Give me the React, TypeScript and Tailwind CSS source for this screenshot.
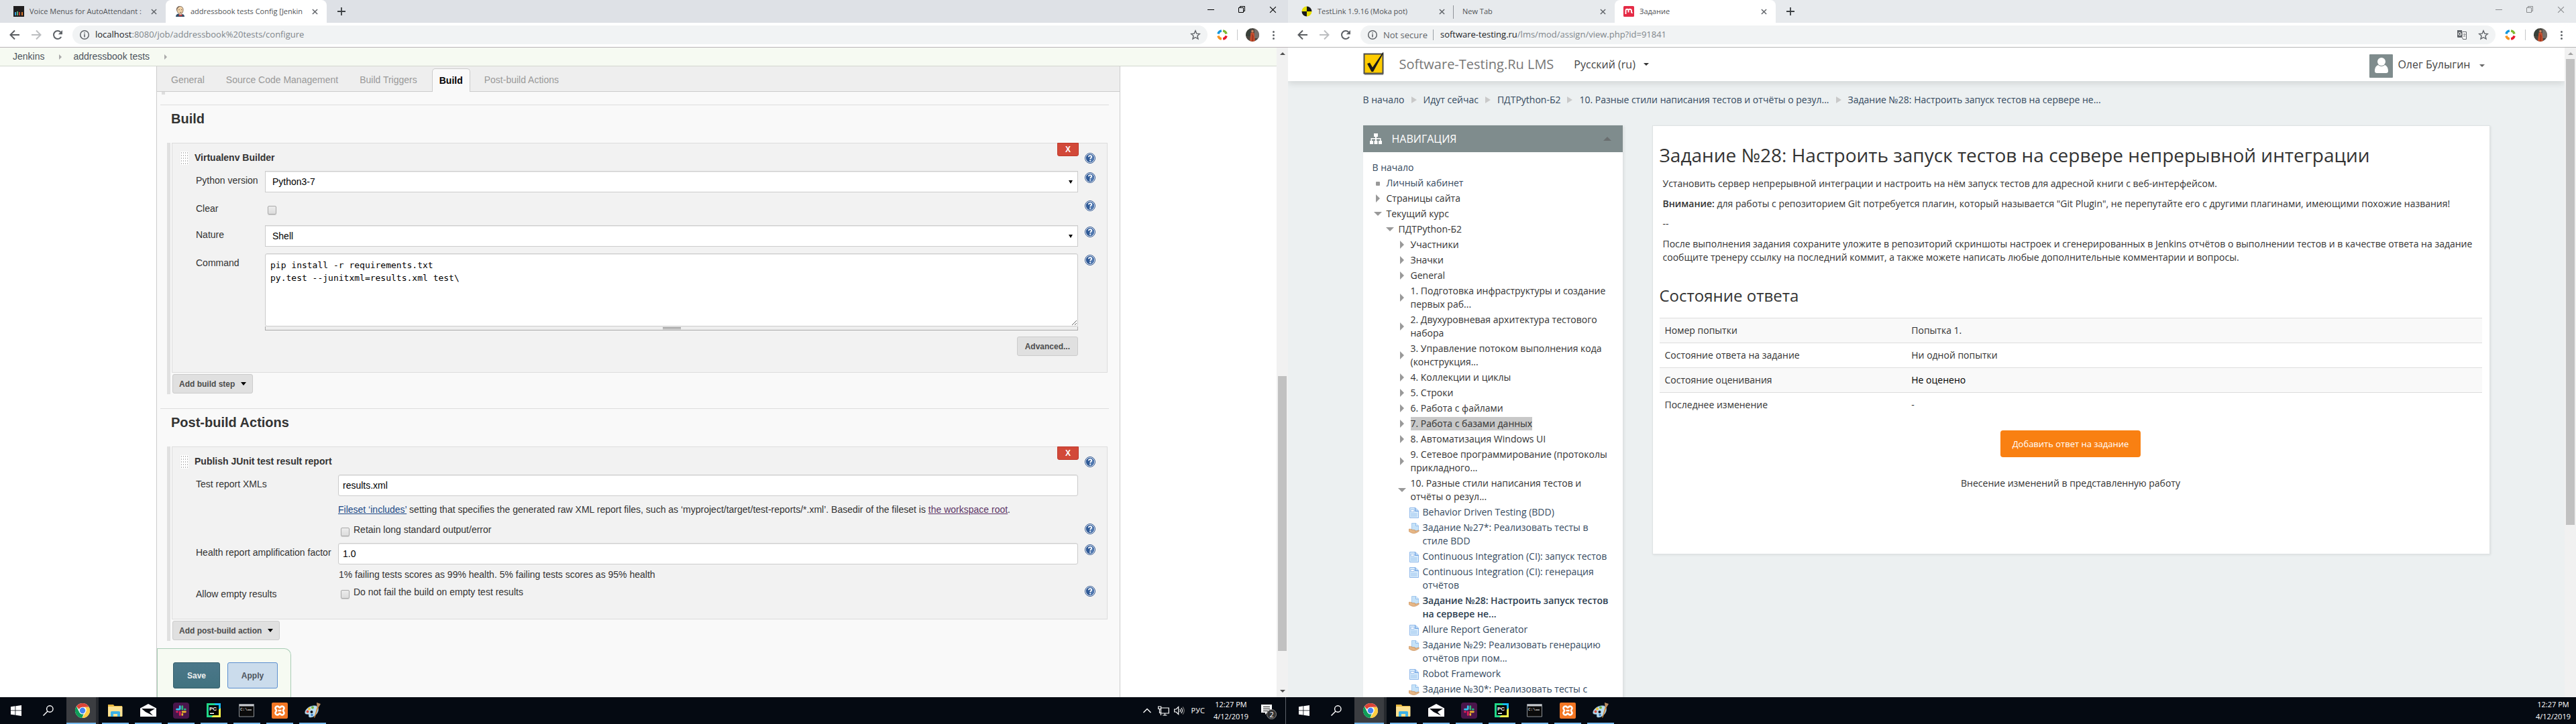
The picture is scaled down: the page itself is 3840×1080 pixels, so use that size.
import React from "react";

const UI = "font-['Open_Sans','Noto_Sans',sans-serif]";
const ARIAL = "font-['Liberation_Sans',Arial,sans-serif]";

/* ---------- shared icons ---------- */

function CloseIcon({ className }: { className: string }) {
  return (
    <svg viewBox="0 0 10 10" className={className} fill="none" stroke="currentColor">
      <path d="M1 1l8 8M9 1L1 9" />
    </svg>
  );
}

function ArrowIcon({ flip, color }: { flip?: boolean; color: string }) {
  return (
    <svg viewBox="0 0 16 16" className="size-4" fill="none" stroke={color} strokeWidth="2">
      {flip ? <path d="M1 8h13M8 1.5L14.5 8L8 14.5" /> : <path d="M15 8H2M8 1.5L1.5 8L8 14.5" />}
    </svg>
  );
}

function ReloadIcon() {
  return (
    <svg viewBox="0 0 16 16" className="size-4">
      <path d="M13.2 11A6 6 0 1 1 12.4 3.9" fill="none" stroke="#5f6368" strokeWidth="2" />
      <path d="M15 1v6.2H8.8z" fill="#5f6368" />
    </svg>
  );
}

function InfoIcon() {
  return (
    <svg viewBox="0 0 16 16" className="size-4 shrink-0">
      <circle cx="8" cy="8" r="6.3" fill="none" stroke="#5f6368" strokeWidth="1.5" />
      <path d="M7.2 7h1.6v4.6H7.2zM7.2 4.4h1.6V6H7.2z" fill="#5f6368" />
    </svg>
  );
}

function StarIcon() {
  return (
    <svg viewBox="0 0 16 16" className="size-4" fill="none" stroke="#5f6368" strokeWidth="1.4">
      <path d="M8 1.8l1.8 4.3 4.6.4-3.5 3 1.1 4.6L8 11.7l-4 2.4 1.1-4.6-3.5-3 4.6-.4z" />
    </svg>
  );
}

function TranslateIcon() {
  return (
    <svg viewBox="0 0 16 16" className="size-4">
      <path d="M1 1h7l1.5 11H2a1 1 0 0 1-1-1z" fill="#5f6368" />
      <path d="M9 3.5h5.5v11H9.5L8.500 12" fill="#fff" stroke="#5f6368" strokeWidth="1" />
      <path d="M7 6.300H5M7 6.300A2.200 2.200 0 1 1 6 4.600" fill="none" stroke="#fff" strokeWidth="1" />
      <path d="M9.500 7h4M11.500 6v1M12.800 7c-.3 2-1.500 3.300-2.800 4M10.500 8.500c.5 1 1.500 2 2.500 2.500" fill="none" stroke="#5f6368" strokeWidth=".8" />
    </svg>
  );
}

function RingIcon() {
  return (
    <svg viewBox="0 0 16 16" className="size-4" fill="none" strokeWidth="3.4">
      <path d="M1.900 6.500A6.300 6.300 0 0 1 6.900 1.800" stroke="#1296db" />
      <path d="M9.100 1.800A6.300 6.300 0 0 1 14.100 6.500" stroke="#7cb82f" />
      <path d="M14.100 9.500A6.300 6.300 0 0 1 9.100 14.200" stroke="#e8192c" />
      <path d="M6.900 14.200A6.300 6.300 0 0 1 1.900 9.500" stroke="#f6921e" />
    </svg>
  );
}

function ProfileIcon() {
  return (
    <svg viewBox="0 0 20 20" className="size-5">
      <clipPath id="avatarClip"><circle cx="10" cy="10" r="10" /></clipPath>
      <g clipPath="url(#avatarClip)">
        <rect width="20" height="20" fill="#4a4640" />
        <path d="M0 0h7v12H0z" fill="#39413a" />
        <path d="M13 1h7v14h-7z" fill="#75706a" />
        <circle cx="10" cy="4.500" r="1.800" fill="#c98762" />
        <path d="M7.500 7c1.500-1 3.500-1 5 0l1.500 13H6z" fill="#c9502d" />
        <path d="M9 8l3 4-1 8H9z" fill="#a63a22" />
      </g>
    </svg>
  );
}

function VoiceFavicon() {
  return (
    <svg viewBox="0 0 16 16" className="size-4 shrink-0">
      <rect width="16" height="16" fill="#1f1d1e" />
      <path d="M2 9h2v5H2z" fill="#3aa0d8" /><path d="M5 8h2v6H5z" fill="#5aa87a" />
      <path d="M8 9h2v5H8z" fill="#c8402f" /><path d="M12 9h2v5h-2z" fill="#d8762c" />
    </svg>
  );
}

function JenkinsFavicon() {
  return (
    <svg viewBox="0 0 16 16" className="size-4 shrink-0">
      <path d="M3.500 5C3.500 1.500 6 .4 8.300.4s4.800 1.500 4.800 5c0 3-1.300 6.600-4.300 6.600S3.500 8 3.500 5z" fill="#eecfa5" stroke="#59483c" strokeWidth=".7" />
      <path d="M3.300 7C2.600 2.500 5 .3 8.300.3l-3.500 3z" fill="#6c5b50" />
      <path d="M6.500 5.500h1.200M10 5.500h1.200M8 9.300c1 .5 2 .3 2.600-.2" stroke="#4b3a30" strokeWidth=".8" fill="none" />
      <path d="M2 16c0-3 2-4.500 4-4.500L9 14l3-2c2 .5 3 2 3 4z" fill="#2f4e68" />
      <path d="M6.500 12.200l2.300 1.300 2.500-1.500v3.500l-2.400-1-2.200 1z" fill="#d33833" />
    </svg>
  );
}

function TestLinkFavicon() {
  return (
    <svg viewBox="0 0 16 16" className="size-4 shrink-0">
      <path d="M8 0.500A7.500 7.500 0 0 0 .5 8H8z" fill="#e8e000" /><path d="M8 .5A7.500 7.500 0 0 1 15.500 8H8z" fill="#1a1a1a" />
      <path d="M8 15.500A7.500 7.500 0 0 1 .5 8H8z" fill="#1a1a1a" /><path d="M8 15.500A7.500 7.500 0 0 0 15.500 8H8z" fill="#e8e000" />
    </svg>
  );
}

function MirapolisFavicon() {
  return (
    <svg viewBox="0 0 16 16" className="size-4 shrink-0">
      <rect width="16" height="16" rx="1.500" fill="#e52b46" />
      <path d="M3.500 12V6.800c0-2.700 4-2.700 4 0V9.500M7.500 6.800c0-2.700 4-2.700 4.500 0V9c0 1 1 1 1.500.5" fill="none" stroke="#fff" strokeWidth="1.900" />
    </svg>
  );
}

/* ---------- browser frame ---------- */

type Tab = { title: string; icon?: React.ReactNode; active?: boolean; divider?: boolean };

function Browser({
  tabs, strip, controls, border, host, path, insecure, translate, thumb, children,
}: {
  tabs: Tab[]; strip: string; controls: string; border: string; host: string; path: string;
  insecure?: boolean; translate?: boolean; thumb: React.ReactNode; children: React.ReactNode;
}) {
  return (
    <section className="flex min-w-0 flex-1 flex-col bg-white">
      <header className={`flex h-[34px] shrink-0 items-stretch pl-[7px] ${strip} ${UI}`}>
        {tabs.map((t) => (
          <div
            key={t.title}
            className={`flex w-60 items-center gap-2 pl-[13px] pr-[9px] ${t.active ? "rounded-t-lg bg-white" : ""} ${t.divider ? "relative after:absolute after:right-0 after:top-2 after:h-5 after:w-px after:bg-[#8f9398]" : ""}`}
          >
            {t.icon}
            <button className="min-w-0 flex-1 whitespace-nowrap text-left text-[11px] text-[#505356]">
              {t.title}
            </button>
            <button aria-label="Close tab" className="p-1 text-[#5f6368]">
              <CloseIcon className="size-[9px] [stroke-width:1.6]" />
            </button>
          </div>
        ))}
        <button aria-label="New tab" className="ml-4 flex items-center text-[#3c4043]">
          <svg viewBox="0 0 12 12" className="size-3" stroke="currentColor" strokeWidth="1.800"><path d="M6 0v12M0 6h12" /></svg>
        </button>
        <div className={`ml-auto flex h-7 items-center ${controls}`}>
          <button aria-label="Minimize" className="flex w-[46px] justify-center">
            <svg viewBox="0 0 10 10" className="size-[10px]" stroke="currentColor"><path d="M0 5.500h10" /></svg>
          </button>
          <button aria-label="Restore" className="flex w-[46px] justify-center">
            <svg viewBox="0 0 10 10" className="size-[10px]" fill="none" stroke="currentColor"><path d="M.5 2.500h7v7h-7zM2.500 2.500v-2h7v7h-2" /></svg>
          </button>
          <button aria-label="Close" className="flex w-[46px] justify-center">
            <CloseIcon className="size-[11px]" />
          </button>
        </div>
      </header>
      <div className={`flex h-[37px] shrink-0 items-center border-b pl-[14px] pr-[20px] ${border} ${UI}`}>
        <button aria-label="Back"><ArrowIcon color="#5a5d61" /></button>
        <button aria-label="Forward" className="ml-4"><ArrowIcon flip color="#bcbec0" /></button>
        <button aria-label="Reload" className="ml-4"><ReloadIcon /></button>
        <div className="ml-[14px] flex h-7 min-w-0 flex-1 items-center rounded-full bg-[#f1f3f4] pl-[10px] pr-[10px] text-[14px]">
          <InfoIcon />
          {insecure && <span className="ml-2 border-r border-[#9aa0a6] pr-2 text-[13px] leading-4 text-[#5f6368]">Not secure</span>}
          <span className={`text-[13px] text-[#202124] ${insecure ? "ml-[10px]" : "ml-2"}`}>{host}</span>
          <input aria-label="Address" readOnly value={path} className="min-w-0 flex-1 bg-transparent text-[13px] text-[#80868b] outline-none" />
          {translate && <button aria-label="Translate" className="mr-4"><TranslateIcon /></button>}
          <button aria-label="Bookmark"><StarIcon /></button>
        </div>
        <button aria-label="Extension" className="ml-[14px]"><RingIcon /></button>
        <span className="ml-[14px] h-4 w-px bg-[#c6c8ca]" />
        <button aria-label="Profile" className="ml-3"><ProfileIcon /></button>
        <button aria-label="Menu" className="ml-5 flex flex-col gap-[2px]">
          <i className="size-[3px] rounded-full bg-[#5f6368]" /><i className="size-[3px] rounded-full bg-[#5f6368]" /><i className="size-[3px] rounded-full bg-[#5f6368]" />
        </button>
      </div>
      <div className="flex min-h-0 flex-1">
        <div className="relative min-w-0 flex-1 overflow-hidden">{children}</div>
        <div className="flex w-[17px] shrink-0 flex-col items-center bg-[#f1f1f1]">{thumb}</div>
      </div>
    </section>
  );
}

/* ---------- Jenkins ---------- */

function Help() {
  return (
    <button aria-label="Help" className="mt-[2px] ml-[10px] size-4 shrink-0">
      <svg viewBox="0 0 16 16" className="size-4">
        <circle cx="8" cy="8" r="7.500" fill="#fff" stroke="#2f5590" />
        <circle cx="8" cy="8" r="6.200" fill="#2f5a97" />
        <path d="M8 2a6 6 0 0 1 6 6a6 6 0 0 1-6 6z" fill="#5078b0" />
        <path d="M5.900 6.200c0-2.800 4.300-2.700 4.300-.1 0 1.600-2.100 1.700-2.100 3.200" fill="none" stroke="#fff" strokeWidth="1.700" />
        <circle cx="8.100" cy="11.600" r="1.100" fill="#fff" />
      </svg>
    </button>
  );
}

function Row({ label, id, wide, help, className = "", children }: {
  label?: string; id?: string; wide?: boolean; help?: boolean; className?: string; children: React.ReactNode;
}) {
  return (
    <div className={`flex items-start pl-[35px] pr-[17px] ${className}`}>
      <label htmlFor={id} className={`shrink-0 whitespace-nowrap pt-1 leading-5 ${wide ? "w-[212px]" : "w-[103px]"}`}>{label}</label>
      <div className="min-w-0 flex-1">{children}</div>
      {help ? <Help /> : <span className="ml-[10px] w-4 shrink-0" />}
    </div>
  );
}

function Check({ id }: { id: string }) {
  return (
    <input id={id} type="checkbox" className="size-[13px] shrink-0 appearance-none rounded-[2px] border border-[#a9a9a9] bg-linear-to-b from-[#ececec] to-[#dcdcdc] shadow-[0_1px_1px_#d0d0d0]" />
  );
}

function Select({ id, value }: { id: string; value: string }) {
  return (
    <div className="relative">
      <select id={id} defaultValue={value} className="block h-8 w-full appearance-none border border-[#ccc] bg-white pl-[10px] text-[14px] text-black shadow-[inset_0_1px_1px_rgba(0,0,0,0.08)]">
        <option>{value}</option>
      </select>
      <svg viewBox="0 0 6 5" className="pointer-events-none absolute right-2 top-[14px] h-[5px] w-[6px]"><path d="M0 0h6L3 5z" /></svg>
    </div>
  );
}

const inputCls = "block h-8 w-full rounded-[3px] border border-[#ccc] bg-white px-[6px] text-[14px] text-black shadow-[inset_0_1px_1px_rgba(0,0,0,0.08)]";

function Section({ title, step, add, children }: { title: string; step: string; add: string; children: React.ReactNode }) {
  return (
    <section>
      <hr className="ml-[5px] mr-4 border-[#ddd]" />
      <h2 className="mt-2 mb-6 ml-[21px] text-[20px] font-bold leading-6">{title}</h2>
      <div className="ml-[15px] mr-[18px] border-l-[5px] border-[#e0e0e0] pb-px pl-[2px]">
        <div className="relative border border-[#ddd] bg-[#f2f2f2] pb-6">
          <button className="absolute -top-px right-[42px] h-5 w-8 rounded-b-[3px] border border-[#c0392b] bg-[#d24939] text-[12px] font-bold leading-4 text-white">X</button>
          <div className="flex items-start pt-3 pl-3 pr-[17px]">
            <svg viewBox="0 0 12 20" className="h-5 w-3 bg-white" stroke="#b5b5b5" strokeDasharray="2 2">
              <path d="M1.500 1v18M4.500 1v18M7.500 1v18M10.500 1v18" />
            </svg>
            <h3 className="ml-[9px] flex-1 text-[14px] font-bold leading-[19px]">{step}</h3>
            <Help />
          </div>
          {children}
        </div>
        <button className="mt-[2px] ml-px flex h-[29px] items-center gap-[9px] rounded-[3px] border border-[#ccc] bg-[#e0e0e0] px-[9px] text-[12px] font-bold text-[#4d4d4d]">
          {add}
          <svg viewBox="0 0 8 5" className="h-[5px] w-2"><path d="M0 0h8L4 5z" /></svg>
        </button>
      </div>
    </section>
  );
}

function Crumb() {
  return <svg viewBox="0 0 4 8" className="h-2 w-1"><path d="M0 0l4 4-4 4z" fill="#aaa" /></svg>;
}

function Jenkins() {
  return (
    <div className={`flex h-full flex-col text-[14px] text-[#333] ${ARIAL}`}>
      <nav className="flex h-7 shrink-0 items-center border-b border-[#d3d7cf] bg-[#f6faf2] pl-[19px] text-[#4d545d]">
        <a href="#jenkins">Jenkins</a><span className="ml-[22px] mr-[17px]"><Crumb /></span>
        <a href="#job">addressbook tests</a><span className="ml-[22px]"><Crumb /></span>
      </nav>
      <main className="mx-[233px] flex-1 border-x border-[#ccc] bg-[#f9f9f9]">
        <div role="tablist" className="flex h-[38px] items-end border-b border-[#ccc] bg-[#eee] pl-[9px] text-[#999]">
          <button role="tab" className="h-[34px] px-3">General</button>
          <button role="tab" className="ml-2 h-[34px] px-3">Source Code Management</button>
          <button role="tab" className="ml-2 h-[34px] px-3">Build Triggers</button>
          <button role="tab" aria-selected="true" className="-mb-px ml-[10px] h-[35px] rounded-t-[5px] border border-b-0 border-[#ccc] bg-[#f9f9f9] px-[10px] font-bold text-black">Build</button>
          <button role="tab" className="ml-[9px] h-[34px] px-3">Post-build Actions</button>
        </div>
        <div className="h-[19px]"><div className="ml-[7px] h-1 w-[5px] bg-[#ddd]" /></div>
        <Section title="Build" step="Virtualenv Builder" add="Add build step">
          <Row label="Python version" id="py" help className="mt-[9px]"><Select id="py" value="Python3-7" /></Row>
          <Row label="Clear" id="clear" help className="mt-[10px] h-[29px]"><div className="pt-2 pl-1"><Check id="clear" /></div></Row>
          <Row label="Nature" id="nature" help className="mt-[10px]"><Select id="nature" value="Shell" /></Row>
          <Row label="Command" id="cmd" help className="mt-[10px]">
            <textarea
              id="cmd"
              className="block h-[109px] w-full resize-y rounded-[3px] border border-[#ccc] bg-white px-[7px] py-[7px] font-['DejaVu_Sans_Mono',monospace] text-[13px] leading-[19px] text-black shadow-[inset_0_1px_1px_rgba(0,0,0,0.08)]"
              defaultValue={"pip install -r requirements.txt\npy.test --junitxml=results.xml test\\"}
            />
            <div className="flex h-[6px] flex-col items-center justify-center gap-px border-x border-b border-[#aaa] bg-[#eee]">
              <i className="h-px w-[27px] bg-[#888]" /><i className="h-px w-[27px] bg-[#888]" />
            </div>
            <div className="mt-[9px] flex justify-end">
              <button className="h-[29px] rounded-[3px] border border-[#ccc] bg-[#e0e0e0] px-[11px] text-[12px] font-bold text-[#4d4d4d]">Advanced...</button>
            </div>
          </Row>
        </Section>
        <div className="h-[21px]" />
        <Section title="Post-build Actions" step="Publish JUnit test result report" add="Add post-build action">
          <Row label="Test report XMLs" id="xml" wide className="mt-[9px]">
            <input id="xml" defaultValue="results.xml" className={inputCls} />
            <p className="mt-[10px] leading-5">
              <a href="#fileset" className="text-[#204a87] underline">Fileset ‘includes’</a> setting that specifies the generated raw XML report files, such as ‘myproject/target/test-reports/*.xml’. Basedir of the fileset is <a href="#ws" className="text-[#5c3566] underline">the workspace root</a>.
            </p>
          </Row>
          <Row wide help className="mt-[9px]">
            <div className="flex items-start pl-1"><span className="flex pt-2"><Check id="retain" /></span><label htmlFor="retain" className="ml-[6px] pt-px leading-5">Retain long standard output/error</label></div>
          </Row>
          <Row label="Health report amplification factor" id="health" wide help className="mt-[10px]">
            <input id="health" defaultValue="1.0" className={inputCls} />
            <p className="mt-[5px] pl-px leading-5">1% failing tests scores as 99% health. 5% failing tests scores as 95% health</p>
          </Row>
          <Row label="Allow empty results" id="empty" wide help className="mt-[5px] pb-[3px]">
            <div className="flex items-start pl-1"><span className="flex pt-2"><Check id="empty" /></span><label htmlFor="empty" className="ml-[6px] pt-px leading-5">Do not fail the build on empty test results</label></div>
          </Row>
        </Section>
      </main>
      <div className="absolute bottom-0 left-[234px] flex h-[73px] w-[200px] items-start gap-[11px] rounded-tr-[10px] border border-b-0 border-[#a9cdb6] bg-[#f6faf2] pt-5 pl-[23px]">
        <button className="h-[39px] w-[70px] rounded-[3px] border border-[#345d6b] bg-[#4b758b] bg-linear-to-b from-[#4b7789] to-[#417280] text-[12px] font-bold text-[#eee]">Save</button>
        <button className="h-[39px] w-[75px] rounded-[3px] border border-[#5c8fd0] bg-[#cbdcec] text-[12px] font-bold text-[#4d545d]">Apply</button>
      </div>
    </div>
  );
}

/* ---------- LMS ---------- */

type Node = { text: string; level: number; kind: "none" | "dot" | "closed" | "open" | "page" | "task"; state?: "selected" | "current" };

const nodes: Node[] = [
  { text: "В начало", level: 0, kind: "none" },
  { text: "Личный кабинет", level: 1, kind: "dot" },
  { text: "Страницы сайта", level: 1, kind: "closed" },
  { text: "Текущий курс", level: 1, kind: "open" },
  { text: "ПДТPython-Б2", level: 2, kind: "open" },
  { text: "Участники", level: 3, kind: "closed" },
  { text: "Значки", level: 3, kind: "closed" },
  { text: "General", level: 3, kind: "closed" },
  { text: "1. Подготовка инфраструктуры и создание первых раб...", level: 3, kind: "closed" },
  { text: "2. Двухуровневая архитектура тестового набора", level: 3, kind: "closed" },
  { text: "3. Управление потоком выполнения кода (конструкция...", level: 3, kind: "closed" },
  { text: "4. Коллекции и циклы", level: 3, kind: "closed" },
  { text: "5. Строки", level: 3, kind: "closed" },
  { text: "6. Работа с файлами", level: 3, kind: "closed" },
  { text: "7. Работа с базами данных", level: 3, kind: "closed", state: "selected" },
  { text: "8. Автоматизация Windows UI", level: 3, kind: "closed" },
  { text: "9. Сетевое программирование (протоколы прикладного...", level: 3, kind: "closed" },
  { text: "10. Разные стили написания тестов и отчёты о резул...", level: 3, kind: "open" },
  { text: "Behavior Driven Testing (BDD)", level: 4, kind: "page" },
  { text: "Задание №27*: Реализовать тесты в стиле BDD", level: 4, kind: "task" },
  { text: "Continuous Integration (CI): запуск тестов", level: 4, kind: "page" },
  { text: "Continuous Integration (CI): генерация отчётов", level: 4, kind: "page" },
  { text: "Задание №28: Настроить запуск тестов на сервере не...", level: 4, kind: "task", state: "current" },
  { text: "Allure Report Generator", level: 4, kind: "page" },
  { text: "Задание №29: Реализовать генерацию отчётов при пом...", level: 4, kind: "task" },
  { text: "Robot Framework", level: 4, kind: "page" },
  { text: "Задание №30*: Реализовать тесты с", level: 4, kind: "task" },
];

const indent = ["", "", "pl-[18px]", "pl-[36px]", "pl-[54px]"];

function Marker({ kind }: { kind: Node["kind"] }) {
  switch (kind) {
    case "none": return null;
    case "dot":
      return <svg viewBox="0 0 16 16" className="mr-[5px] size-4 shrink-0"><rect x="5" y="6" width="6" height="6" rx="1" fill="#999" /></svg>;
    case "closed":
      return <svg viewBox="0 0 16 16" className="mr-[5px] size-4 shrink-0"><path d="M5 2l6 6-6 6z" fill="#999" /></svg>;
    case "open":
      return <svg viewBox="0 0 16 16" className="mr-[5px] size-4 shrink-0"><path d="M2 5h12l-6 6z" fill="#999" /></svg>;
    case "page":
      return (
        <svg viewBox="0 0 16 16" className="mr-[5px] mt-[3px] size-4 shrink-0 self-start">
          <path d="M1.500.5h8.500l4.500 4.500v10.500h-13z" fill="#d9ecfb" stroke="#8fb8ea" />
          <path d="M9.500.5v5h5" fill="#b5d5f5" stroke="#6d9fe0" />
          <path d="M3 3.500h5v3H3z" fill="#fff" stroke="#8fb8ea" strokeWidth=".8" />
          <path d="M3 9h9.500M3 11h9.500M3 13h9.500" stroke="#9ec6f0" strokeWidth="1" />
        </svg>
      );
    case "task":
      return (
        <svg viewBox="0 0 16 16" className="mr-[5px] mt-[3px] size-4 shrink-0 self-start">
          <path d="M4.500.5h6l4 3.500v8h-10z" fill="#c5e2f8" stroke="#a3c8ee" />
          <path d="M10.500.5v4h4" fill="#e5f3fd" stroke="#7fb0e8" strokeWidth=".8" />
          <path d="M0 9.500c2-.6 3.500-.3 5 .8l4 .4c1.200.3 1 1.400 0 1.500h1.500l4-1.200c1.200 0 1.200 1 .5 1.500-2 1.500-4.500 3-7.500 3C4.500 15.500 2 14 0 12.500z" fill="#e6b685" stroke="#c58b55" strokeWidth=".7" />
        </svg>
      );
  }
}

const crumbs = ["В начало", "Идут сейчас", "ПДТPython-Б2", "10. Разные стили написания тестов и отчёты о резул...", "Задание №28: Настроить запуск тестов на сервере не..."];

const status = [
  ["Номер попытки", "Попытка 1."],
  ["Состояние ответа на задание", "Ни одной попытки"],
  ["Состояние оценивания", "Не оценено"],
  ["Последнее изменение", "-"],
];

function Lms() {
  return (
    <div className={`flex h-full flex-col bg-[#ecf0f1] text-[14px] leading-5 text-[#333] ${UI}`}>
      <header className="z-10 h-[50px] shrink-0 bg-white shadow-[0_3px_10px_rgba(0,0,0,0.12)]">
        <div className="mx-auto flex h-full max-w-[1680px] items-center">
          <svg viewBox="0 0 32 37" className="mt-px h-[37px] w-8">
            <path d="M2 4h28v30H2z" fill="#a8a8a8" />
            <path d="M1.500 2.500h28v29h-28z" fill="#ffcc00" stroke="#4b4b4b" strokeWidth="2" />
            <path d="M6 17l4-1.500 4 7L29.500 0l1 .8L15 29h-2.500z" fill="#1a1a1a" />
          </svg>
          <a href="#home" className="ml-[22px] text-[20px] leading-7 text-[#777]">Software-Testing.Ru LMS</a>
          <button className="ml-[30px] flex items-center gap-3 text-[16px] text-[#444]">
            Русский (ru)<svg viewBox="0 0 8 4" className="h-1 w-2"><path d="M0 0h8L4 4z" fill="#333" /></svg>
          </button>
          <button className="ml-auto mr-2 flex items-center text-[16px] text-[#444]">
            <svg viewBox="0 0 35 35" className="mr-[7px] mt-1 size-[35px]">
              <rect width="35" height="35" rx="1" fill="#7f8c8d" />
              <ellipse cx="18" cy="11" rx="6" ry="6" fill="#fff" />
              <path d="M8 25c0-5 2-8 5-9 3 2.500 7 2.500 10 0 3 1 5 4 5 9 0 2-1 3-3 3H11c-2 0-3-1-3-3z" fill="#fff" />
            </svg>
            Олег Булыгин
            <svg viewBox="0 0 8 4" className="ml-[13px] mt-1 h-1 w-2"><path d="M0 0h8L4 4z" fill="#666" /></svg>
          </button>
        </div>
      </header>
      <div className="mx-auto min-h-0 w-full max-w-[1680px] flex-1 pt-[18px]">
        <nav aria-label="Путь" className="flex items-center">
          {crumbs.map((c, i) => (
            <React.Fragment key={c}>
              {i > 0 && <svg viewBox="0 0 10 10" className="mx-[9px] size-[10px]"><path d="M1 0l8 5-8 5z" fill="#c9c9c9" /></svg>}
              <a href="#crumb" className="text-[#34495e]">{c}</a>
            </React.Fragment>
          ))}
        </nav>
        <div className="mt-7 flex items-start">
          <aside className="w-[387px] shrink-0 bg-white pb-6 shadow-[2px_1px_4px_rgba(0,0,0,0.08)]">
            <h2 className="flex h-10 items-center bg-[#7f8c8d] pl-[9px] text-[16px] text-white">
              <svg viewBox="0 0 20 18" className="h-[18px] w-5" fill="#fff">
                <path d="M7 1h6v5h-2v2h6.500v4H19v5h-5v-5h2V9.500h-5V12h1.500v5h-5v-5H9V9.500H4V12h2v5H1v-5h1.500V8H9V6H7z" />
              </svg>
              <span className="ml-[14px]">НАВИГАЦИЯ</span>
              <svg viewBox="0 0 12 6" className="ml-auto mr-[17px] h-[6px] w-3"><path d="M0 6h12L6 0z" fill="#6a6f70" /></svg>
            </h2>
            <ul className="space-y-[3px] pt-[13px] pl-[14px] pr-4 text-[#34495e]">
              {nodes.map((n) => (
                <li key={n.text} className={`flex items-center ${indent[n.level]}`}>
                  <Marker kind={n.kind} />
                  <a href="#node" className={n.state === "selected" ? "bg-[#c8c8c8] text-[#333]" : n.state === "current" ? "font-semibold text-[#2c3e50]" : n.kind === "closed" || n.kind === "open" ? "text-[#333]" : ""}>{n.text}</a>
                </li>
              ))}
            </ul>
          </aside>
          <main className="ml-11 min-w-0 flex-1 border border-[#dfe3e4] bg-white pl-[10px] pr-[11px] pt-[23px] pb-[95px] shadow-[1px_1px_3px_rgba(0,0,0,0.08)]">
            <h1 className="text-[28px] leading-10">Задание №28: Настроить запуск тестов на сервере непрерывной интеграции</h1>
            <div className="mt-[13px] space-y-[10px] px-[5px]">
              <p>Установить сервер непрерывной интеграции и настроить на нём запуск тестов для адресной книги с веб-интерфейсом.</p>
              <p><b className="font-semibold">Внимание:</b> для работы с репозиторием Git потребуется плагин, который называется "Git Plugin", не перепутайте его с другими плагинами, имеющими похожие названия!</p>
              <p>--</p>
              <p>После выполнения задания сохраните уложите в репозиторий скриншоты настроек и сгенерированных в Jenkins отчётов о выполнении тестов и в качестве ответа на задание сообщите тренеру ссылку на последний коммит, а также можете написать любые дополнительные комментарии и вопросы.</p>
            </div>
            <h2 className="mt-[27px] text-[24px] leading-10">Состояние ответа</h2>
            <table className="mt-[13px] w-full">
              <tbody>
                {status.map(([k, v], i) => (
                  <tr key={k} className={`border-t border-[#ddd] ${i % 2 === 0 ? "bg-[#f9f9f9]" : ""}`}>
                    <th scope="row" className="w-[30%] p-2 text-left font-normal">{k}</th>
                    <td className={`p-2 ${i === 2 ? "text-black" : ""}`}>{v}</td>
                  </tr>
                ))}
              </tbody>
            </table>
            <div className="mt-5 flex flex-col items-center">
              <button className="h-10 rounded-[4px] bg-[#f98012] px-[18px] text-[13px] text-white">Добавить ответ на задание</button>
              <p className="mt-[29px]">Внесение изменений в представленную работу</p>
            </div>
          </main>
        </div>
      </div>
    </div>
  );
}

/* ---------- taskbar ---------- */

const apps: { name: string; icon: React.ReactNode }[] = [
  { name: "Chrome", icon: (
    <svg viewBox="0 0 24 24" className="size-6">
      <circle cx="12" cy="12" r="11" fill="#fff" />
      <path d="M12 1a11 11 0 0 1 9.600 5.700H12a5.300 5.300 0 0 0-5 3.600L3 5.700A11 11 0 0 1 12 1z" fill="#db4437" />
      <path d="M21.600 6.700A11 11 0 0 1 11.300 23l5.200-8.200a5.300 5.300 0 0 0-1.200-8.100z" fill="#ffcd40" />
      <path d="M2.900 5.700l4.500 9a5.300 5.300 0 0 0 6.300 2.300L11.300 23A11 11 0 0 1 2.900 5.700z" fill="#0f9d58" />
      <circle cx="12" cy="12" r="5.200" fill="#f1f1f1" /><circle cx="12" cy="12" r="4.200" fill="#4285f4" />
    </svg>) },
  { name: "Explorer", icon: (
    <svg viewBox="0 0 24 24" className="size-6">
      <path d="M1 3h8l1.500 2H22v16H1z" fill="#e9b83f" /><path d="M1 6h21.500v14.500H1z" fill="#fde292" />
      <path d="M5 21v-6.500a1.500 1.500 0 0 1 1.500-1.500h11a1.500 1.500 0 0 1 1.500 1.500V21h-4v-4H9v4z" fill="#3eb2e6" />
    </svg>) },
  { name: "Mail", icon: (
    <svg viewBox="0 0 24 24" className="size-6">
      <path d="M0 8.500L12 2l12 6.500V21H0z" fill="#fff" /><path d="M2 9h20l-8 5 5 5.500L8 14z" fill="#05080f" />
    </svg>) },
  { name: "Slack", icon: (
    <svg viewBox="0 0 24 24" className="size-6">
      <rect width="24" height="24" rx="4" fill="#4a154b" />
      <g strokeWidth="2.700" strokeLinecap="round">
        <path d="M10.200 5.500v4M5.500 10.200h4" stroke="#36c5f0" /><path d="M13.800 5.500v4.500M18.300 10.200h-1" stroke="#2eb67d" />
        <path d="M14 13.800h4.500M13.800 17v1.500" stroke="#ecb22e" /><path d="M10.200 14v4.500M5.500 13.800h1" stroke="#e01e5a" />
      </g>
    </svg>) },
  { name: "PyCharm", icon: (
    <svg viewBox="0 0 24 24" className="size-6">
      <path d="M1 1h21v21H1z" fill="#21d789" /><path d="M12 1h10v12z" fill="#16b8f3" /><path d="M22 8v14H8z" fill="#fcf84a" />
      <path d="M4 4h15v15H4z" fill="#000" />
      <text x="5" y="12" fontSize="8" fontWeight="700" fontFamily="Liberation Sans, sans-serif" fill="#fff">PC</text>
      <path d="M6 15.500h6v1.500H6z" fill="#fff" />
    </svg>) },
  { name: "Command Prompt", icon: (
    <svg viewBox="0 0 24 24" className="size-6">
      <path d="M.5 2.500h22v18.500H.5z" fill="#0b0b0b" stroke="#8c9196" /><path d="M1 3h21v2.500H1z" fill="#c7cbd0" />
      <text x="2" y="11.500" fontSize="6" fontFamily="Liberation Mono, monospace" fill="#fff">C:\</text>
      <path d="M13 11h6" stroke="#fff" />
    </svg>) },
  { name: "XAMPP", icon: (
    <svg viewBox="0 0 24 24" className="size-6">
      <rect width="24" height="24" rx="2" fill="#f37623" />
      <path d="M5.500 8.500a3 3 0 0 1 5.500-1.500c.5 1 1.500 1 2 0a3 3 0 0 1 5.500 1.500c0 1.500-1.500 2-1.500 3.500s1.500 2 1.500 3.500a3 3 0 0 1-5.500 1.500c-.5-1-1.500-1-2 0a3 3 0 0 1-5.500-1.500c0-1.500 1.500-2 1.500-3.500s-1.500-2-1.500-3.500zM9.500 12h5" fill="none" stroke="#fff" strokeWidth="2.600" />
    </svg>) },
  { name: "Paint", icon: (
    <svg viewBox="0 0 24 24" className="size-6">
      <path d="M12 5c6-1 9 1.500 8.500 6-.7 6-6.500 11-12 11-2.500 0-2.500-2-2-3.500S3 18 1 16.500C-.5 12 5 6 12 5z" fill="#b9dcef" stroke="#7da9c4" strokeWidth=".7" />
      <circle cx="12" cy="7.500" r="1.900" fill="#6cb33f" /><circle cx="7" cy="9.500" r="1.900" fill="#f2c230" /><circle cx="4.500" cy="13.500" r="1.900" fill="#d6493b" />
      <circle cx="10.500" cy="14" r="2" fill="#0b1018" /><circle cx="11" cy="18.500" r="1.800" fill="#3d7fc4" />
      <path d="M19 5.500l2 1L15.500 22l-1.500 1z" fill="#d98a35" /><path d="M18 0l6 2-3 5-2.500-1.500z" fill="#b98c62" />
    </svg>) },
];

function Taskbar({ tray }: { tray?: boolean }) {
  return (
    <footer className={`flex h-10 min-w-0 flex-1 items-stretch bg-[#050a12] text-[11px] text-white ${UI}`}>
      <button aria-label="Start" className="flex w-12 items-center justify-center">
        <svg viewBox="0 0 16 16" className="size-4" fill="#fff"><path d="M0 2.200l6.500-.9v6.200H0zM7.300 1.200L16 0v7.500H7.300zM0 8.300h6.500v6.300L0 13.700zM7.300 8.300H16V16l-8.700-1.200z" /></svg>
      </button>
      <button aria-label="Search" className="mr-[3px] flex w-12 items-center justify-center">
        <svg viewBox="0 0 16 16" className="size-4" fill="none" stroke="#fff" strokeWidth="1.400"><circle cx="10.300" cy="5.500" r="4.700" /><path d="M7 9l-6.500 6.500" /></svg>
      </button>
      {apps.map((a, i) => (
        <button
          key={a.name}
          aria-label={a.name}
          className={`mr-px flex w-12 flex-col items-center justify-between pt-2 ${i === 0 ? "border-r-4 border-[#26292e] bg-[#3b3d41]" : ""}`}
        >
          <span className={i === 0 ? "ml-1" : ""}>{a.icon}</span>
          <i className={`h-[2px] bg-[#76b9ed] ${i === 0 ? "w-11" : "w-10"}`} />
        </button>
      ))}
      <div className="ml-auto flex items-center">
        {tray && (
          <>
            <svg viewBox="0 0 12 8" className="h-2 w-3" fill="none" stroke="#fff" strokeWidth="1.300"><path d="M.5 7L6 1.500 11.500 7" /></svg>
            <svg viewBox="0 0 17 15" className="ml-[10px] h-[15px] w-[17px]" fill="none" stroke="#fff" strokeWidth="1.200"><path d="M5 3h11.300v8H5.500M2.500 5v5.500h3M7.500 14h6M10.500 11v3M.7 1h4v3.500h-4zM4.500 5v9" /></svg>
            <svg viewBox="0 0 16 14" className="ml-[7px] h-[14px] w-4" fill="none" stroke="#fff" strokeWidth="1.200"><path d="M.7 5h2.500l3.500-3.500v11L3.200 9H.7zM8.800 5c1 1 1 3 0 4M10.800 3c2 2.500 2 5.500 0 8" /><path d="M13 1.300c2.800 3.500 2.800 8 0 11.400" stroke="#777" /></svg>
            <span className="ml-[10px]">РУС</span>
          </>
        )}
        <time className={`text-center leading-[18px] ${tray ? "ml-[13px] mr-[17px]" : "mr-2"}`}>12:27 PM<br />4/12/2019</time>
        {tray && (
          <>
            <svg viewBox="0 0 26 26" className="mr-3 size-[26px]">
              <path d="M2 4h16v12H11l-3 3v-3H2z" fill="#fff" /><path d="M5 7.500h10M5 10.500h10M5 13.500h7" stroke="#111" />
              <circle cx="17.500" cy="18.500" r="7" fill="#333" stroke="#8a8a8a" />
              <text x="14.500" y="22.500" fontSize="11" fontFamily="Open Sans, sans-serif" fill="#fff">2</text>
            </svg>
            <span className="mr-[3px] h-10 w-px bg-[#5b6068]" />
          </>
        )}
      </div>
    </footer>
  );
}

export default function App() {
  return (
    <div className="flex h-screen flex-col overflow-hidden">
      <div className="flex min-h-0 flex-1">
        <Browser
          strip="bg-[#dee1e6]" controls="text-black" border="border-[#b9b3b6]" host="localhost" path=":8080/job/addressbook%20tests/configure"
          tabs={[
            { title: "Voice Menus for AutoAttendant :", icon: <VoiceFavicon /> },
            { title: "addressbook tests Config [Jenkin", icon: <JenkinsFavicon />, active: true },
          ]}
          thumb={
            <>
              <svg viewBox="0 0 8 4" className="mt-[7px] h-1 w-2"><path d="M0 4h8L4 0z" fill="#505050" /></svg>
              <div className="flex-[478]" />
              <div className="w-[13px] flex-[410] bg-[#c1c1c1]" />
              <div className="flex-[58]" />
              <svg viewBox="0 0 8 4" className="mb-[7px] h-1 w-2"><path d="M0 0h8L4 4z" fill="#505050" /></svg>
            </>
          }
        >
          <Jenkins />
        </Browser>
        <Browser
          strip="bg-[#e7eaed]" controls="text-[#8a8c8e]" border="border-[#b6b6b6]" insecure translate host="software-testing.ru" path="/lms/mod/assign/view.php?id=91841"
          tabs={[
            { title: "TestLink 1.9.16 (Moka pot)", icon: <TestLinkFavicon />, divider: true },
            { title: "New Tab" },
            { title: "Задание", icon: <MirapolisFavicon />, active: true },
          ]}
          thumb={
            <>
              <svg viewBox="0 0 8 4" className="mt-[7px] mb-[6px] h-1 w-2"><path d="M0 4h8L4 0z" fill="#a3a3a3" /></svg>
              <div className="w-[13px] flex-[695] bg-[#c1c1c1]" />
              <div className="flex-[257]" />
            </>
          }
        >
          <Lms />
        </Browser>
      </div>
      <div className="flex shrink-0"><Taskbar tray /><Taskbar /></div>
    </div>
  );
}
